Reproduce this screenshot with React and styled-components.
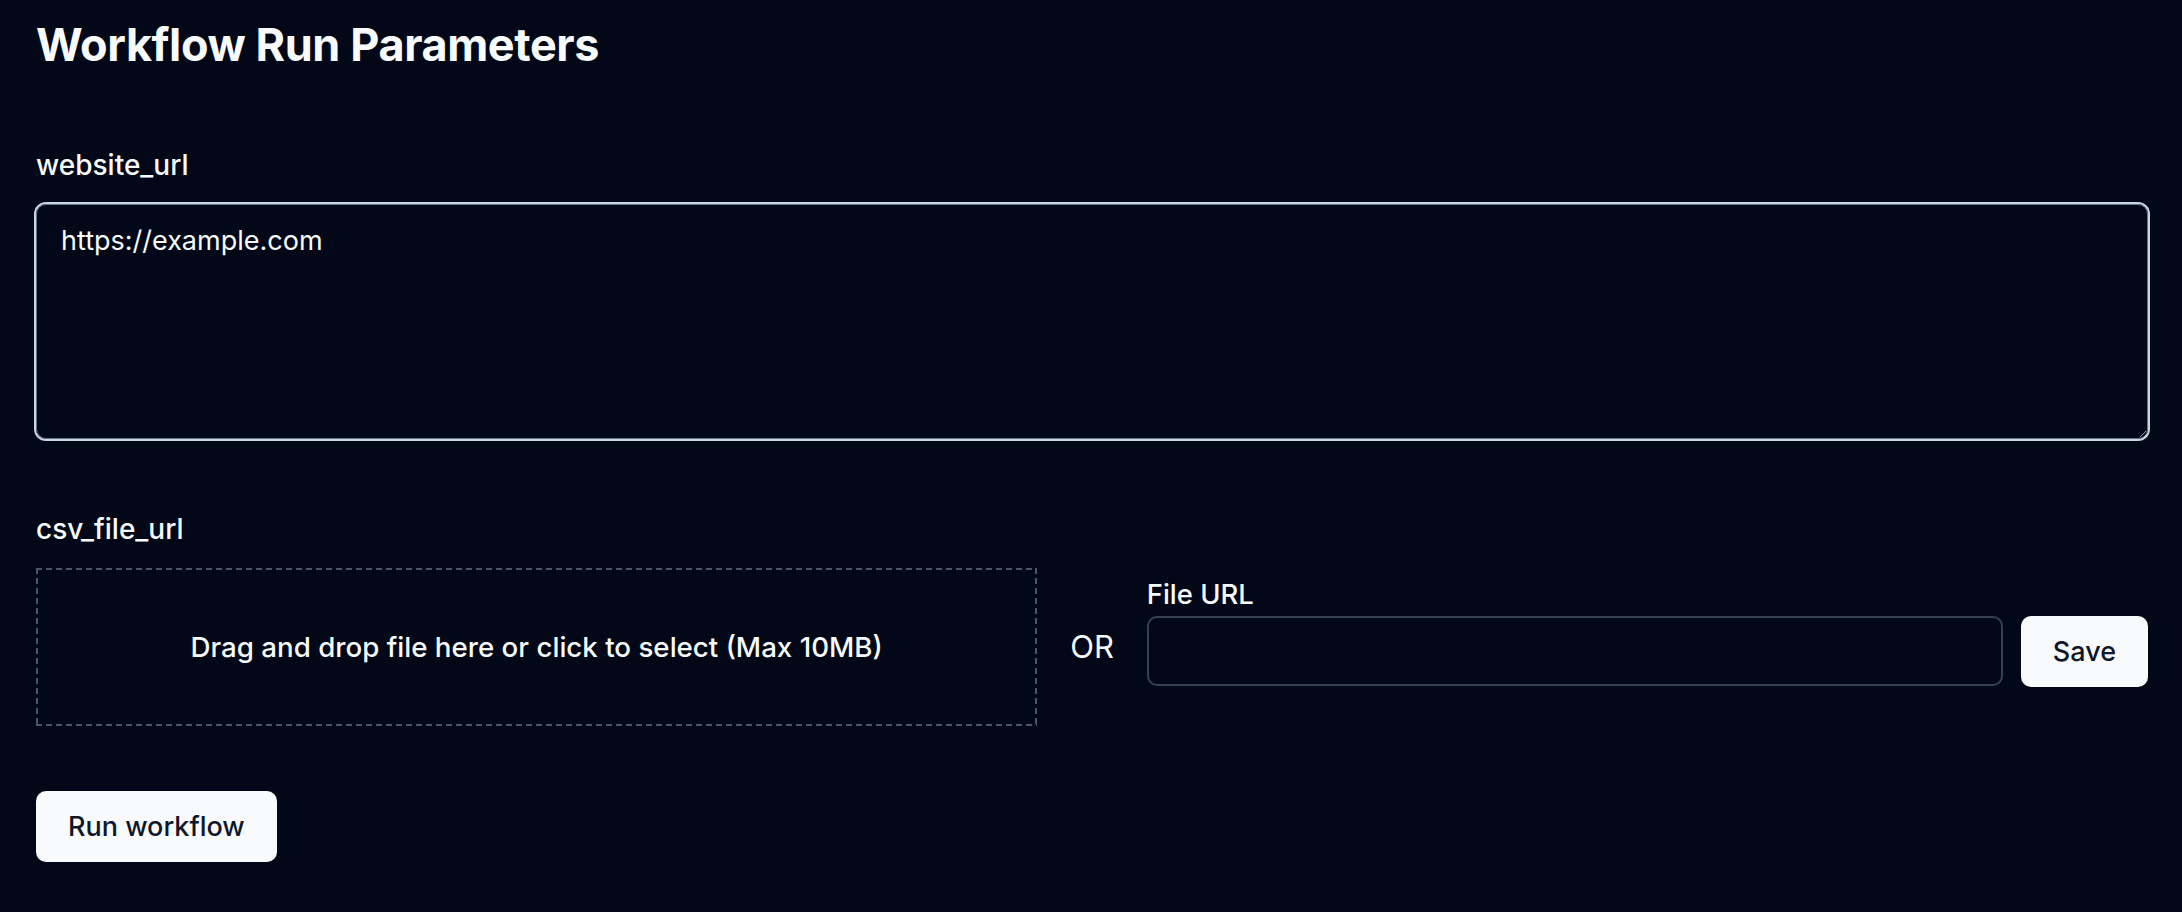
import React from "react";
import styled, { createGlobalStyle } from "styled-components";

const colors = {
  background: "#020817",
  foreground: "#f8fafc",
  buttonText: "#0f172a",
  inputBorder: "#374151",
  dashed: "#4b5563",
  ring: "#cbd5e1",
};

const GlobalStyle = createGlobalStyle`
  html, body {
    margin: 0;
    padding: 0;
    background: ${colors.background};
    color: ${colors.foreground};
    font-family: Inter, "Noto Sans", "Liberation Sans", sans-serif;
  }
  * {
    box-sizing: border-box;
  }
`;

const Page = styled.main`
  min-height: 912px;
  padding: 17px 34px 40px 36px;
`;

const Title = styled.h1`
  margin: 0;
  font-size: 45px;
  line-height: 56px;
  font-weight: 700;
  letter-spacing: -0.4px;
`;

const Form = styled.form`
  display: flex;
  flex-direction: column;
  margin-top: 74px;
`;

const Field = styled.div`
  display: flex;
  flex-direction: column;
  gap: 21px;
  margin-bottom: ${(p) => p.spacing}px;
`;

const Label = styled.label`
  font-size: ${(p) => p.size || 28}px;
  line-height: 36px;
  font-weight: 500;
`;

const TextArea = styled.textarea`
  width: 100%;
  height: 235px;
  padding: 18px 24px;
  border: 1px solid #64748b;
  border-radius: 10px;
  box-shadow: 0 0 0 2px ${colors.ring};
  background: transparent;
  color: ${colors.foreground};
  font-family: inherit;
  font-size: 27px;
  line-height: 36px;
  outline: none;
  resize: vertical;
`;

const FileRow = styled.div`
  display: flex;
  align-items: center;
  gap: 33px;
`;

const dash = (dir) =>
  `repeating-linear-gradient(${dir}, ${colors.dashed} 0 6px, transparent 6px 10px)`;

const DropZone = styled.div`
  flex: 1;
  height: 158px;
  display: flex;
  align-items: center;
  justify-content: center;
  background:
    ${dash("90deg")} top left / 100% 2px no-repeat,
    ${dash("90deg")} bottom left / 100% 2px no-repeat,
    ${dash("180deg")} top left / 2px 100% no-repeat,
    ${dash("180deg")} top right / 2px 100% no-repeat;
  font-size: 27.7px;
  font-weight: 500;
  cursor: pointer;
`;

const Or = styled.span`
  font-size: 31px;
  line-height: 40px;
`;

const UrlGroup = styled.div`
  flex: 1;
  display: flex;
  flex-direction: column;
  gap: 4px;
  padding-bottom: 32px;
`;

const InputRow = styled.div`
  display: flex;
  gap: 18px;
`;

const TextInput = styled.input`
  flex: 1;
  height: 70px;
  padding: 0 24px;
  border: 2px solid ${colors.inputBorder};
  border-radius: 10px;
  background: transparent;
  color: ${colors.foreground};
  font-family: inherit;
  font-size: 27px;
  outline: none;
`;

const Button = styled.button`
  height: 71px;
  padding: 0 32px;
  border: none;
  border-radius: 10px;
  background: ${colors.foreground};
  color: ${colors.buttonText};
  font-family: inherit;
  font-size: 27px;
  font-weight: 500;
  cursor: pointer;
  align-self: flex-start;
`;

export default function App() {
  return (
    <>
      <GlobalStyle />
      <Page>
        <Title>Workflow Run Parameters</Title>
        <Form onSubmit={(e) => e.preventDefault()}>
          <Field spacing={72}>
            <Label htmlFor="website_url">website_url</Label>
            <TextArea id="website_url" defaultValue="https://example.com" />
          </Field>
          <Field spacing={65}>
            <Label>csv_file_url</Label>
            <FileRow>
              <DropZone>Drag and drop file here or click to select (Max 10MB)</DropZone>
              <Or>OR</Or>
              <UrlGroup>
                <Label htmlFor="file_url" size={27.4}>File URL</Label>
                <InputRow>
                  <TextInput id="file_url" type="text" />
                  <Button type="button">Save</Button>
                </InputRow>
              </UrlGroup>
            </FileRow>
          </Field>
          <Button type="submit">Run workflow</Button>
        </Form>
      </Page>
    </>
  );
}
